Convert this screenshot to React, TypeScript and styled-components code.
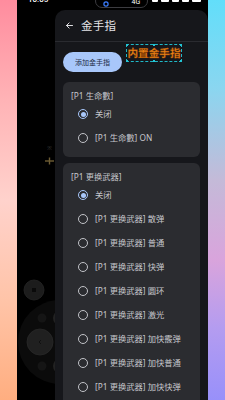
import React from "react";
import styled, { createGlobalStyle } from "styled-components";

const Global = createGlobalStyle`
  html, body { margin: 0; padding: 0; background: #000; }
  body { width: 225px; height: 400px; overflow: hidden; font-family: "Noto Sans", "Noto Sans CJK SC", sans-serif; }
  #root { width: 225px; height: 400px; }
`;

const Screen = styled.div`
  width: 225px;
  height: 400px;
  display: grid;
  grid-template-columns: 17px 191px 17px;
  overflow: hidden;
`;

const LeftStrip = styled.div`
  background: linear-gradient(to bottom, #ff8c9e 0%, #ffb3b6 25%, #ffd2cc 50%, #ffc4a8 75%, #ffae80 100%);
`;

const RightStrip = styled.div`
  background: linear-gradient(to bottom, #62defa 0%, #8ad6f0 22%, #c4bad8 45%, #d9a4dc 65%, #b49cf0 82%, #9890fa 100%);
`;

const Phone = styled.div`
  background: #000;
  display: flex;
  flex-direction: column;
  overflow: hidden;
`;

const StatusBar = styled.div`
  height: 10px;
  flex: none;
  display: flex;
  align-items: flex-start;
  overflow: hidden;
  color: #fff;
`;

const Clock = styled.span`
  font-family: Roboto, sans-serif;
  font-size: 8px;
  line-height: 8px;
  margin: -4px 0 0 11px;
  font-weight: 500;
`;

const Island = styled.div`
  width: 53px;
  height: 14px;
  margin: -6px 0 0 47px;
  border: 1px solid #3c3c40;
  border-radius: 8px;
  box-sizing: border-box;
  display: flex;
  align-items: center;
  justify-content: space-between;
  padding: 0 7px;
`;

const IslandText = styled.span`
  font-family: Roboto, sans-serif;
  font-size: 7px;
  line-height: 7px;
  color: #fff;
  margin-top: 3px;
`;

const StatusIcons = styled.div`
  display: flex;
  gap: 3px;
  margin: -3px 0 0 4px;
`;

const StatusDot = styled.div<{ $w: number }>`
  width: ${(p) => p.$w}px;
  height: 5px;
  background: #fff;
  border-radius: 1px;
`;

const Body = styled.div`
  flex: 1;
  display: flex;
  min-height: 0;
`;

const GameArea = styled.div`
  width: 38px;
  flex: none;
`;

const Panel = styled.div`
  flex: 1;
  background: #16171b;
  border-radius: 10px 10px 0 0;
  display: flex;
  flex-direction: column;
  min-width: 0;
  overflow: hidden;
`;

const Header = styled.div`
  height: 31px;
  flex: none;
  display: flex;
  align-items: center;
  padding-left: 10px;
  gap: 7px;
  border-bottom: 1px solid #2a2b30;
`;

const Title = styled.span`
  color: #e4e4e8;
  font-size: 11.5px;
  line-height: 14px;
  letter-spacing: 0.2px;
`;

const Content = styled.div`
  display: flex;
  flex-direction: column;
  padding: 10px 8px 0 8px;
  gap: 9px;
`;

const TopRow = styled.div`
  display: flex;
  align-items: flex-start;
  position: relative;
  height: 21px;
`;

const AddButton = styled.button`
  width: 59px;
  height: 20px;
  border: none;
  border-radius: 10px;
  background: #a8c7fa;
  color: #1e2b44;
  font-family: "Noto Sans CJK SC", sans-serif;
  font-size: 7px;
  padding: 0;
  display: flex;
  align-items: center;
  justify-content: center;
`;

const Overlay = styled.div`
  position: absolute;
  left: 63px;
  top: -8px;
  width: 56px;
  height: 18px;
  border: 1px dashed #1fb8c8;
  box-sizing: border-box;
  display: flex;
  align-items: center;
  justify-content: center;
  white-space: nowrap;
  color: #ee8418;
  font-size: 10.6px;
  line-height: 12px;
  font-weight: 700;
  -webkit-text-stroke: 0.3px #8a3e00;
`;

const Handle = styled.span<{ $x: string; $y: string }>`
  position: absolute;
  width: 2px;
  height: 2px;
  background: #23c4d4;
  left: ${(p) => p.$x};
  top: ${(p) => p.$y};
  transform: translate(-50%, -50%);
`;

const Cards = styled.div`
  display: flex;
  flex-direction: column;
  gap: 6px;
`;

const Card = styled.div`
  background: #2b2c30;
  border-radius: 6px;
  padding: 8px 0 7px 0;
  display: flex;
  flex-direction: column;
`;

const CardTitle = styled.div`
  color: #c6c7cc;
  font-size: 8.3px;
  line-height: 12px;
  padding-left: 8px;
`;

const Option = styled.div`
  height: 24px;
  display: flex;
  align-items: center;
  padding-left: 15px;
  gap: 7px;
`;

const Radio = styled.span<{ $on: boolean }>`
  width: 10px;
  height: 10px;
  box-sizing: border-box;
  border-radius: 50%;
  border: 1.2px solid ${(p) => (p.$on ? "#a8c7fa" : "#c2c3c8")};
  display: flex;
  align-items: center;
  justify-content: center;
  flex: none;
  &::after {
    content: "";
    width: 5px;
    height: 5px;
    border-radius: 50%;
    background: #a8c7fa;
    display: ${(p) => (p.$on ? "block" : "none")};
  }
`;

const OptionText = styled.span`
  color: #c6c7cc;
  font-size: 8.3px;
  line-height: 12px;
  white-space: nowrap;
`;

const groups = [
  {
    title: "[P1 生命數]",
    options: ["关闭", "[P1 生命數] ON"],
  },
  {
    title: "[P1 更换武器]",
    options: [
      "关闭",
      "[P1 更换武器] 散弹",
      "[P1 更换武器] 普通",
      "[P1 更换武器] 快弹",
      "[P1 更换武器] 圆环",
      "[P1 更换武器] 激光",
      "[P1 更换武器] 加快霰弹",
      "[P1 更换武器] 加快普通",
      "[P1 更换武器] 加快快弹",
    ],
  },
];

const GameControls = () => (
  <svg width="38" height="390" viewBox="0 0 38 390" style={{ display: "block" }}>
    <text x="30" y="140" fontSize="6" fill="#333">
      ※
    </text>
    <rect x="28" y="150.3" width="9" height="1.4" fill="#6e5d34" />
    <rect x="31.8" y="147.5" width="1.4" height="7" fill="#6e5d34" />
    <circle cx="17" cy="280" r="10" fill="#1c1c1c" stroke="#262626" strokeWidth="0.8" />
    <rect x="15" y="278" width="4" height="4" fill="#0a0a0a" />
    <circle cx="43" cy="332" r="42" fill="#0b0b0b" />
    <circle cx="23" cy="332" r="13" fill="#202020" stroke="#282828" strokeWidth="0.8" />
    <path d="M24 330 L22 332 L24 334" stroke="#0c0c0c" strokeWidth="0.8" fill="none" />
    <circle cx="25" cy="308" r="4.5" fill="#151515" />
    <circle cx="25" cy="356" r="4.5" fill="#151515" />
    <circle cx="44" cy="308" r="8" fill="#222" />
    <circle cx="44" cy="356" r="8" fill="#222" />
  </svg>
);

const BackArrow = () => (
  <svg width="9" height="9" viewBox="0 0 24 24" fill="none" stroke="#e4e4e8" strokeWidth="2.6" strokeLinecap="round" strokeLinejoin="round">
    <path d="M20 12H4" />
    <path d="M11 5l-7 7 7 7" />
  </svg>
);

export default function App() {
  return (
    <>
      <Global />
      <Screen>
        <LeftStrip />
        <Phone>
          <StatusBar>
            <Clock>10:05</Clock>
            <Island>
              <svg width="6" height="6" viewBox="0 0 10 10" style={{ marginTop: 5 }}>
                <circle cx="5" cy="5" r="3.5" stroke="#3b7dff" strokeWidth="2" fill="none" />
              </svg>
              <IslandText>4G</IslandText>
            </Island>
            <StatusIcons>
              <StatusDot $w={6} />
              <StatusDot $w={8} />
              <StatusDot $w={7} />
              <StatusDot $w={7} />
              <StatusDot $w={9} />
            </StatusIcons>
          </StatusBar>
          <Body>
            <GameArea>
              <GameControls />
            </GameArea>
            <Panel>
              <Header>
                <BackArrow />
                <Title>金手指</Title>
              </Header>
              <Content>
                <TopRow>
                  <AddButton>添加金手指</AddButton>
                  <Overlay>
                    内置金手指
                    <Handle $x="0%" $y="0%" />
                    <Handle $x="50%" $y="0%" />
                    <Handle $x="100%" $y="0%" />
                    <Handle $x="0%" $y="100%" />
                    <Handle $x="50%" $y="100%" />
                    <Handle $x="100%" $y="100%" />
                  </Overlay>
                </TopRow>
                <Cards>
                  {groups.map((g) => (
                    <Card key={g.title}>
                      <CardTitle>{g.title}</CardTitle>
                      {g.options.map((o, i) => (
                        <Option key={o}>
                          <Radio $on={i === 0} />
                          <OptionText>{o}</OptionText>
                        </Option>
                      ))}
                    </Card>
                  ))}
                </Cards>
              </Content>
            </Panel>
          </Body>
        </Phone>
        <RightStrip />
      </Screen>
    </>
  );
}
